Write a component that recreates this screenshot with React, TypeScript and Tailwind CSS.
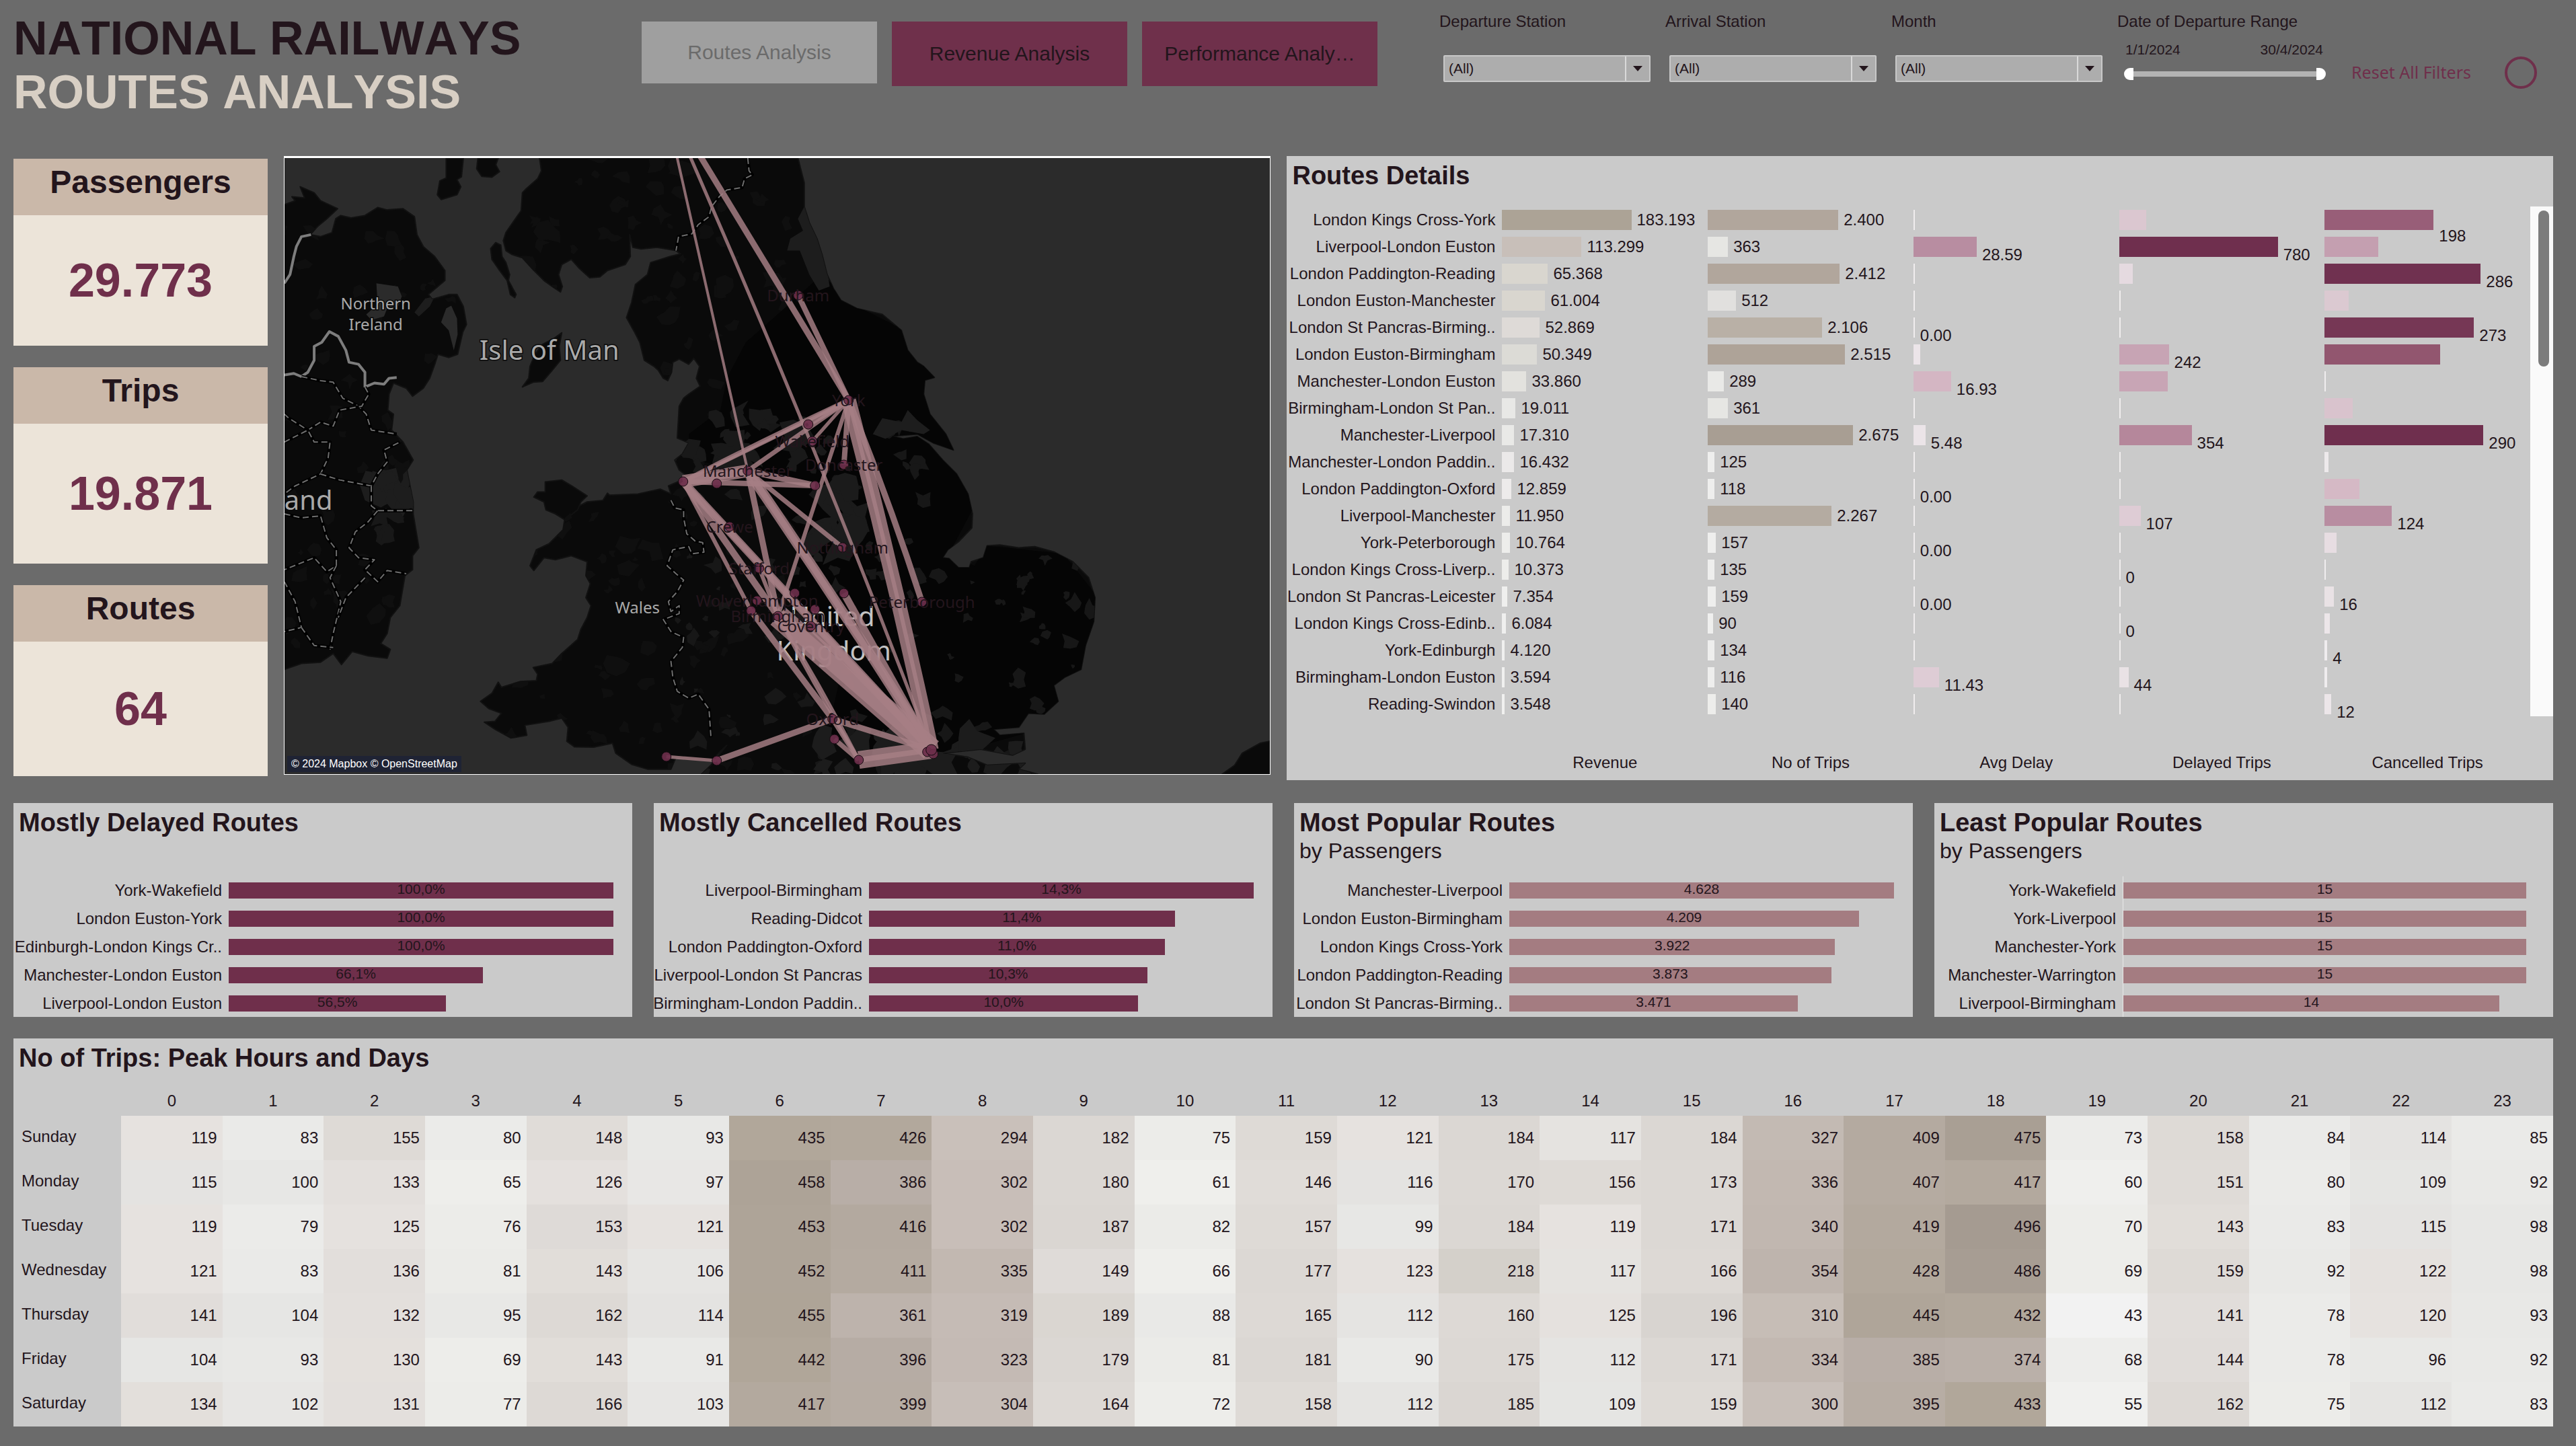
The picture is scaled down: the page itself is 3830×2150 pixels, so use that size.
import React from "react";

const INK = "#23151c";

/* ---------- data ---------- */

type Bar = { w: number; c: string; v?: string; drop?: boolean };
type Route = { name: string; cells: [Bar, Bar, Bar, Bar, Bar] };

const z = (v?: string): Bar => ({ w: 2, c: "#f0edee", v });
const b = (w: number, c: string, v?: string, drop?: boolean): Bar => ({ w, c, v, drop });

const routes: Route[] = [
  { name: "London Kings Cross-York", cells: [b(192, "#aca396", "183.193"), b(194, "#b1a69c", "2.400"), z(), b(40, "#dbc7d0"), b(162, "#985e78", "198", true)] },
  { name: "Liverpool-London Euston", cells: [b(118, "#c8bfb9", "113.299"), b(30, "#e6e6e3", "363"), b(94, "#b88da1", "28.59"), b(236, "#6f2f4e", "780"), b(80, "#c49fb0")] },
  { name: "London Paddington-Reading", cells: [b(68, "#d9d6cf", "65.368"), b(196, "#b1a69c", "2.412"), z(), b(20, "#e5dae0"), b(232, "#703150", "286")] },
  { name: "London Euston-Manchester", cells: [b(64, "#d9d6cf", "61.004"), b(42, "#e1e0de", "512"), z(), z(), b(36, "#dbc9d1")] },
  { name: "London St Pancras-Birming..", cells: [b(56, "#dedad7", "52.869"), b(170, "#b9b0a6", "2.106"), z("0.00"), z(), b(222, "#763755", "273")] },
  { name: "London Euston-Birmingham", cells: [b(52, "#dcdbd6", "50.349"), b(204, "#aea398", "2.515"), b(10, "#ece5e9"), b(74, "#c7a4b4", "242"), b(172, "#92566f")] },
  { name: "Manchester-London Euston", cells: [b(36, "#e3e2de", "33.860"), b(24, "#e9e9e7", "289"), b(56, "#d4b6c3", "16.93"), b(72, "#c8a5b5"), z()] },
  { name: "Birmingham-London St Pan..", cells: [b(20, "#e8e8e6", "19.011"), b(30, "#e6e6e3", "361"), z(), z(), b(42, "#d9c3cd")] },
  { name: "Manchester-Liverpool", cells: [b(18, "#e9e9e7", "17.310"), b(216, "#a89e93", "2.675"), b(18, "#ebe4e8", "5.48"), b(108, "#b5879b", "354"), b(236, "#6f2f4e", "290")] },
  { name: "Manchester-London Paddin..", cells: [b(18, "#ebe9e9", "16.432"), b(10, "#eeeeed", "125"), z(), z(), b(6, "#ede9eb")] },
  { name: "London Paddington-Oxford", cells: [b(14, "#edebeb", "12.859"), b(10, "#eeeeed", "118"), z("0.00"), z(), b(52, "#d5b9c5")] },
  { name: "Liverpool-Manchester", cells: [b(12, "#ececea", "11.950"), b(184, "#b4aba1", "2.267"), z(), b(32, "#deccd5", "107"), b(100, "#b88da1", "124")] },
  { name: "York-Peterborough", cells: [b(12, "#ededeb", "10.764"), b(12, "#eeeeed", "157"), z("0.00"), z(), b(18, "#e7dde2")] },
  { name: "London Kings Cross-Liverp..", cells: [b(10, "#ededeb", "10.373"), b(10, "#eeeeed", "135"), z(), z("0"), z()] },
  { name: "London St Pancras-Leicester", cells: [b(8, "#efefee", "7.354"), b(12, "#eeeeed", "159"), z("0.00"), z(), b(14, "#e9e2e5", "16")] },
  { name: "London Kings Cross-Edinb..", cells: [b(6, "#efefee", "6.084"), b(8, "#efefee", "90"), z(), z("0"), b(8, "#ece6e9")] },
  { name: "York-Edinburgh", cells: [b(4, "#f0f0ef", "4.120"), b(10, "#eeeeed", "134"), z(), z(), b(4, "#efecee", "4")] },
  { name: "Birmingham-London Euston", cells: [b(4, "#f0f0ef", "3.594"), b(10, "#eeeeed", "116"), b(38, "#deccd5", "11.43"), b(14, "#e9e2e5", "44"), b(4, "#efecee")] },
  { name: "Reading-Swindon", cells: [b(4, "#f0f0ef", "3.548"), b(12, "#ededeb", "140"), z(), z(), b(10, "#ece6e9", "12")] },
];

const measures = ["Revenue", "No of Trips", "Avg Delay", "Delayed Trips", "Cancelled Trips"];

type Ranked = { name: string; label: string; pct: number };
const delayed: Ranked[] = [
  { name: "York-Wakefield", label: "100,0%", pct: 100 },
  { name: "London Euston-York", label: "100,0%", pct: 100 },
  { name: "Edinburgh-London Kings Cr..", label: "100,0%", pct: 100 },
  { name: "Manchester-London Euston", label: "66,1%", pct: 66.1 },
  { name: "Liverpool-London Euston", label: "56,5%", pct: 56.5 },
];
const cancelled: Ranked[] = [
  { name: "Liverpool-Birmingham", label: "14,3%", pct: 100 },
  { name: "Reading-Didcot", label: "11,4%", pct: 79.5 },
  { name: "London Paddington-Oxford", label: "11,0%", pct: 76.9 },
  { name: "Liverpool-London St Pancras", label: "10,3%", pct: 72.3 },
  { name: "Birmingham-London Paddin..", label: "10,0%", pct: 70 },
];
const popular: Ranked[] = [
  { name: "Manchester-Liverpool", label: "4.628", pct: 100 },
  { name: "London Euston-Birmingham", label: "4.209", pct: 90.9 },
  { name: "London Kings Cross-York", label: "3.922", pct: 84.7 },
  { name: "London Paddington-Reading", label: "3.873", pct: 83.7 },
  { name: "London St Pancras-Birming..", label: "3.471", pct: 75 },
];
const leastPopular: Ranked[] = [
  { name: "York-Wakefield", label: "15", pct: 100 },
  { name: "York-Liverpool", label: "15", pct: 100 },
  { name: "Manchester-York", label: "15", pct: 100 },
  { name: "Manchester-Warrington", label: "15", pct: 100 },
  { name: "Liverpool-Birmingham", label: "14", pct: 93.3 },
];

const peak: [string, number[]][] = [
  ["Sunday", [119, 83, 155, 80, 148, 93, 435, 426, 294, 182, 75, 159, 121, 184, 117, 184, 327, 409, 475, 73, 158, 84, 114, 85]],
  ["Monday", [115, 100, 133, 65, 126, 97, 458, 386, 302, 180, 61, 146, 116, 170, 156, 173, 336, 407, 417, 60, 151, 80, 109, 92]],
  ["Tuesday", [119, 79, 125, 76, 153, 121, 453, 416, 302, 187, 82, 157, 99, 184, 119, 171, 340, 419, 496, 70, 143, 83, 115, 98]],
  ["Wednesday", [121, 83, 136, 81, 143, 106, 452, 411, 335, 149, 66, 177, 123, 218, 117, 166, 354, 428, 486, 69, 159, 92, 122, 98]],
  ["Thursday", [141, 104, 132, 95, 162, 114, 455, 361, 319, 189, 88, 165, 112, 160, 125, 196, 310, 445, 432, 43, 141, 78, 120, 93]],
  ["Friday", [104, 93, 130, 69, 143, 91, 442, 396, 323, 179, 81, 181, 90, 175, 112, 171, 334, 385, 374, 68, 144, 78, 96, 92]],
  ["Saturday", [134, 102, 131, 77, 166, 103, 417, 399, 304, 164, 72, 158, 112, 185, 109, 159, 300, 395, 433, 55, 162, 75, 112, 83]],
];

const stops: [number, number, number, number][] = [
  [43, 242, 242, 242],
  [65, 238, 238, 235],
  [90, 233, 233, 231],
  [116, 228, 227, 225],
  [119, 230, 226, 223],
  [155, 222, 218, 214],
  [182, 219, 215, 211],
  [218, 212, 208, 202],
  [294, 201, 192, 186],
  [335, 194, 184, 177],
  [386, 184, 174, 167],
  [410, 180, 170, 160],
  [435, 177, 167, 154],
  [458, 173, 163, 151],
  [496, 165, 155, 145],
];
function shade(v: number) {
  for (let i = 1; i < stops.length; i++) {
    const a = stops[i - 1];
    const c = stops[i];
    if (v <= c[0]) {
      const t = (v - a[0]) / (c[0] - a[0]);
      const m = (k: number) => Math.round(a[k] + (c[k] - a[k]) * t);
      return `rgb(${m(1)}, ${m(2)}, ${m(3)})`;
    }
  }
  return "#a59b91";
}

/* ---------- header ---------- */

function FilterSelect({ id, label }: { id: string; label: string }) {
  return (
    <div className="flex w-84 shrink-0 flex-col">
      <label htmlFor={id} className="h-[66px] text-2xl leading-8 text-[#23151c]">
        {label}
      </label>
      <div className="relative ml-1.5 h-10 w-[308px]">
        <select id={id} className="h-full w-full appearance-none rounded-xs border-2 border-[#c8c8c8] bg-[#adadad] pl-1.5 text-[21px] text-[#23151c]">
          <option>(All)</option>
        </select>
        <span className="pointer-events-none absolute inset-y-0.5 right-0.5 flex w-9 items-center justify-center border-l-2 border-[#d9d9d9]">
          <svg width="14" height="8" viewBox="0 0 14 8">
            <path d="M0 0h14L7 8z" fill={INK} />
          </svg>
        </span>
      </div>
    </div>
  );
}

const thumb =
  "pointer-events-none absolute inset-0 m-0 h-full w-full appearance-none bg-transparent [&::-webkit-slider-thumb]:pointer-events-auto [&::-webkit-slider-thumb]:h-[18px] [&::-webkit-slider-thumb]:w-3.5 [&::-webkit-slider-thumb]:appearance-none [&::-webkit-slider-thumb]:bg-white";

function Header() {
  return (
    <header className="flex h-58 items-start">
      <h1 className="w-[934px] shrink-0 pt-[17px] text-[70px] leading-20 font-bold whitespace-nowrap text-[#23151c] [font-kerning:none]">
        NATIONAL RAILWAYS
        <br />
        <span className="text-[#d8cfc4]">ROUTES ANALYSIS</span>
      </h1>
      <nav className="flex shrink-0 gap-[22px] pt-8 text-3xl text-[#23151c]">
        <button className="h-23 w-[350px] bg-[#9f9f9f] text-[#6b6b6b]">Routes Analysis</button>
        <button className="h-24 w-[350px] bg-[#6f304b]">Revenue Analysis</button>
        <button className="h-24 w-[350px] bg-[#6f304b]">Performance Analy…</button>
      </nav>
      <div className="ml-23 flex pt-4">
        <FilterSelect id="dep" label="Departure Station" />
        <FilterSelect id="arr" label="Arrival Station" />
        <FilterSelect id="mon" label="Month" />
        <fieldset className="w-[348px]">
          <legend className="text-2xl leading-8 text-[#23151c]">Date of Departure Range</legend>
          <div className="ml-2.5 w-[300px]">
            <div className="mt-2 flex justify-between pr-1 pl-0.5 text-[21px] leading-9 text-[#23151c]">
              <span>1/1/2024</span>
              <span>30/4/2024</span>
            </div>
            <div className="relative mt-2 h-5">
              <div className="absolute inset-x-3 top-1.5 h-2 bg-[#b3b3b3]" />
              <input type="range" aria-label="Range start" defaultValue={0} className={thumb + " [&::-webkit-slider-thumb]:rounded-l-full"} />
              <input type="range" aria-label="Range end" defaultValue={100} className={thumb + " [&::-webkit-slider-thumb]:rounded-r-full"} />
            </div>
          </div>
        </fieldset>
        <button className="mt-[68px] flex h-12 items-center gap-[50px] font-['Noto_Sans'] text-[25px] whitespace-nowrap text-[#6f2f4b]">
          Reset All Filters
          <svg width="48" height="48" viewBox="0 0 48 48">
            <circle cx="24" cy="24" r="22" fill="none" stroke="#6f2f4b" strokeWidth="4" />
          </svg>
        </button>
      </div>
    </header>
  );
}

/* ---------- KPI cards ---------- */

function Kpi({ title, value, body }: { title: string; value: string; body: string }) {
  return (
    <section className="text-center font-bold">
      <h2 className="h-21 bg-[#cab8a9] text-5xl leading-[70px] text-[#23151c]">{title}</h2>
      <p className={"flex items-center justify-center bg-[#ece4d9] text-[70px] text-[#6f2f4b] " + body}>{value}</p>
    </section>
  );
}

/* ---------- map ---------- */

const land = {
  britain:
    "405,8 408,40 402,60 384,85 378,95 376,140 365,165 352,195 348,215 352,240 362,250 378,258 395,288 412,315 425,330 438,344 441,330 435,300 440,275 455,262 468,285 484,308 500,306 512,290 540,275 548,255 547,200 552,232 565,236 590,232 620,240 627,248 610,255 596,262 580,270 575,300 556,325 550,370 542,408 555,445 563,470 570,515 585,530 592,540 600,560 607,566 613,545 615,520 625,512 640,525 648,510 657,530 652,560 658,580 640,600 632,610 625,630 622,710 640,722 630,750 618,765 625,790 640,808 608,830 612,850 595,838 560,850 515,853 512,848 505,866 480,870 462,885 445,910 442,940 420,975 400,990 390,1030 396,1042 412,1010 430,1015 455,1005 480,1020 478,1055 485,1075 478,1110 486,1130 480,1160 470,1190 465,1215 440,1250 425,1275 395,1285 402,1302 400,1318 375,1320 345,1335 340,1322 330,1350 312,1370 325,1388 345,1400 335,1420 318,1422 335,1440 360,1462 385,1455 382,1430 420,1420 440,1412 450,1435 448,1470 460,1484 490,1485 520,1475 525,1500 550,1528 575,1540 612,1540 620,1510 650,1515 675,1520 690,1495 700,1480 675,1530 660,1553 1190,1553 1160,1540 1170,1525 1110,1530 1080,1510 1040,1500 1100,1490 1150,1505 1170,1490 1168,1450 1130,1455 1120,1440 1160,1435 1175,1400 1200,1402 1222,1370 1215,1330 1232,1310 1258,1290 1265,1230 1278,1170 1280,1110 1270,1060 1245,1020 1215,995 1185,982 1160,985 1130,978 1110,980 1104,1010 1085,1020 1082,1035 1065,1035 1050,1012 1040,1010 1048,990 1065,970 1086,935 1087,900 1080,850 1062,800 1040,765 1018,725 1000,706 978,712 960,705 1000,700 1025,722 1057,740 1045,700 1020,650 1010,600 1012,565 1027,558 1010,530 1000,520 985,490 975,440 945,400 905,385 880,365 868,335 858,300 850,250 842,210 830,170 822,130 822,70 812,8",
  ireland:
    "3,125 20,115 15,105 35,108 28,80 50,95 60,115 87,135 70,160 55,180 44,200 60,205 78,195 84,160 92,152 108,158 130,152 150,132 165,138 190,135 208,155 212,200 222,230 240,255 256,290 256,315 230,350 236,362 262,350 275,350 285,380 290,425 284,445 276,500 262,508 245,500 240,525 232,560 222,585 205,605 195,585 175,572 168,600 166,640 175,650 172,690 190,720 206,765 196,790 206,870 206,900 215,985 205,1005 205,1040 193,1055 185,1130 170,1160 165,1200 155,1225 170,1240 165,1262 135,1256 110,1245 93,1278 80,1250 60,1272 30,1275 3,1290",
  kintyre: "258,8 285,8 282,55 275,62 281,80 275,100 250,112 244,100 248,65 258,58",
  arran: "308,8 340,8 336,25 342,42 330,56 314,54 306,35",
  rhins: "336,220 344,226 346,255 352,270 358,300 356,315 368,350 366,358 359,350 354,315 340,285 330,262 328,235",
  man: "440,446 428,460 410,475 398,500 390,530 388,560 378,582 395,570 410,568 425,540 438,515 436,480",
  anglesey: "414,820 440,815 456,830 480,855 470,870 465,890 445,915 430,900 415,890 412,870 396,858 402,845 414,845",
  norfolk: "1480,1553 1500,1530 1512,1500 1540,1475 1555,1470 1555,1553",
};
const east =
  "700,560 730,470 780,400 850,300 900,375 980,440 1030,560 1015,590 1060,740 1090,880 1050,1000 1090,1030 1110,980 1230,1000 1290,1120 1270,1290 1220,1380 1170,1450 1060,1500 900,1520 860,1440 880,1300 840,1180 800,1080 820,960 780,880 740,800 640,760 640,700 690,640";

const water = ["148,322 182,330 188,355 182,382 165,385 160,405 140,414 132,400 150,375", "258,385 266,378 275,410 276,450 270,490 262,440 250,420"];

const irishBorder = [
  "3,552 18,548 30,556 40,545 50,515 50,480 62,470 74,443 88,455 100,490 105,520 120,525 130,545 130,582 145,572 160,575 168,560 180,558",
  "3,322 12,300 18,255 22,230 30,205 45,200",
];
const dashed = [
  "733,8 735,40 740,50 728,60 724,82 700,88 688,105 676,130 672,155 655,175 645,198 624,205 620,240",
  "612,866 618,885 632,890 632,910 637,950 650,968 662,972 664,996 645,1000 640,982 615,990 606,1030 620,1050 632,1066 622,1095 608,1120 612,1145 625,1130 625,1150 600,1165 612,1195 632,1210 630,1235 612,1270 615,1310 622,1345 640,1362 655,1352 672,1390 675,1460",
  "30,556 60,566 80,570 95,610 120,630 132,650 140,690 180,700",
  "130,582 136,600 125,630 90,640 80,680 60,670 40,690 10,660 3,650",
  "3,720 40,690 50,720 75,720 72,760 60,800 20,830 3,850",
  "60,800 90,815 140,830 150,800 165,770 160,740 185,720",
  "140,830 140,880 150,892 205,892",
  "150,892 135,920 115,945 105,985 120,1010 145,1015 130,1040 150,1070 165,1042 195,1050",
  "3,900 30,910 60,905 70,960 85,990 85,1030 70,1045 50,1010 3,1040",
  "85,1030 75,1060 92,1120 80,1200 75,1240",
  "130,1060 100,1110 88,1160",
  "3,1070 20,1120 30,1185 3,1195",
  "30,1185 50,1230 80,1235",
];

function blobs(seed: number, n: number, x0: number, y0: number, x1: number, y1: number, size: number) {
  let s = seed;
  const r = () => {
    s = (s * 16807) % 2147483647;
    return s / 2147483647;
  };
  return Array.from({ length: n }, () => {
    const cx = x0 + r() * (x1 - x0);
    const cy = y0 + r() * (y1 - y0);
    const k = size * (0.3 + r());
    const pts = Array.from({ length: 8 }, (_, i) => {
      const a = (i / 8) * Math.PI * 2;
      const d = k * (0.35 + r());
      return `${Math.round(cx + Math.cos(a) * d)},${Math.round(cy + Math.sin(a) * d * 1.5)}`;
    });
    return pts.join(" ");
  });
}

const city: Record<string, [number, number]> = {
  Edinburgh: [563, -94],
  Durham: [764, 204],
  York: [839, 360],
  Leeds: [779, 396],
  Wakefield: [785, 421],
  Doncaster: [832, 456],
  Manchester: [689, 465],
  Liverpool: [593, 481],
  Warrington: [643, 484],
  Sheffield: [789, 487],
  Crewe: [662, 548],
  Nottingham: [830, 579],
  Stafford: [706, 610],
  Tamworth: [759, 647],
  Leicester: [832, 647],
  Wolverhampton: [703, 658],
  Dudley: [694, 673],
  Nuneaton: [789, 671],
  Birmingham: [734, 681],
  Coventry: [783, 696],
  Peterborough: [948, 660],
  Oxford: [815, 834],
  Didcot: [818, 864],
  Reading: [854, 895],
  Bristol: [643, 896],
  Cardiff: [568, 890],
  Paddington: [956, 883],
  Euston: [965, 886],
  London: [962, 880],
};

const links: [string, string, number, number?][] = [
  ["Edinburgh", "Manchester", 4],
  ["Edinburgh", "London", 5, 16],
  ["Edinburgh", "York", 9],
  ["York", "Durham", 8],
  ["York", "Leeds", 8],
  ["York", "Liverpool", 7, -6],
  ["York", "Liverpool", 5, 4],
  ["York", "Manchester", 7],
  ["York", "Wakefield", 5],
  ["York", "Doncaster", 8],
  ["York", "Peterborough", 9, 6],
  ["York", "London", 22, 6],
  ["York", "London", 6, 6],
  ["York", "Birmingham", 6],
  ["Liverpool", "Manchester", 19],
  ["Liverpool", "Manchester", 12],
  ["Liverpool", "Sheffield", 8],
  ["Manchester", "Sheffield", 9],
  ["Manchester", "Nottingham", 7],
  ["Manchester", "London", 15, 6],
  ["Manchester", "London", 9, 6],
  ["Manchester", "Birmingham", 9],
  ["Liverpool", "London", 12],
  ["Liverpool", "London", 8],
  ["Liverpool", "Birmingham", 10],
  ["Liverpool", "Dudley", 6],
  ["Stafford", "Birmingham", 6],
  ["Birmingham", "London", 34],
  ["Birmingham", "London", 22],
  ["Coventry", "London", 12, 4],
  ["Leicester", "London", 11],
  ["Birmingham", "Reading", 5, 6],
  ["Birmingham", "Reading", 5, -4],
  ["Dudley", "Oxford", 9],
  ["Oxford", "Reading", 7],
  ["Didcot", "Reading", 7],
  ["Oxford", "London", 9],
  ["Oxford", "Bristol", 9],
  ["Bristol", "Cardiff", 5],
  ["Reading", "London", 26],
  ["Reading", "London", 8],
];

const named = ["Durham", "York", "Wakefield", "Doncaster", "Manchester", "Crewe", "Nottingham", "Stafford", "Wolverhampton", "Birmingham", "Coventry", "Peterborough", "Oxford"];

function RouteMap() {
  return (
    <section aria-label="Route map" className="relative h-[920px] self-start overflow-hidden border border-t-[3px] border-white bg-[#2b2b2b]">
      <svg className="h-full w-full" viewBox="0 0 1466 916" preserveAspectRatio="xMidYMid slice">
        <defs>
          <clipPath id="gb">
            <polygon points={land.britain} />
          </clipPath>
          <clipPath id="ie">
            <polygon points={land.ireland} />
          </clipPath>
        </defs>
        <g transform="scale(.9439 .5931) translate(-3 -8)">
          {Object.values(land).map((p) => (
            <polygon key={p} points={p} fill="#0a0a0a" stroke="#111" strokeWidth="2" vectorEffect="non-scaling-stroke" strokeLinejoin="round" />
          ))}
          <g clipPath="url(#gb)">
            {blobs(11, 170, 340, 0, 830, 1553, 15).map((p) => (
              <polygon key={p} points={p} fill="#0f0f0f" />
            ))}
            <polygon points={east} fill="#050505" />
            {blobs(77, 130, 620, 640, 1280, 1553, 12).map((p) => (
              <polygon key={p} points={p} fill="#171717" />
            ))}
            {blobs(5, 26, 640, 640, 860, 800, 20).map((p) => (
              <polygon key={p} points={p} fill="#191919" />
            ))}
            {blobs(9, 22, 850, 1440, 1170, 1553, 26).map((p) => (
              <polygon key={p} points={p} fill="#1c1c1c" />
            ))}
            {blobs(21, 12, 840, 820, 900, 1010, 24).map((p) => (
              <polygon key={p} points={p} fill="#1b1b1b" />
            ))}
            <polygon points="822,130 850,200 862,330 845,340 830,300 815,240 795,240 800,210 820,190 812,160" fill="#1d1d1d" />
            <polygon points="930,700 945,660 975,670 985,640 1000,665 1020,690 1010,700 975,690 950,712" fill="#1d1d1d" />
          </g>
          <g clipPath="url(#ie)">
            {blobs(31, 70, 0, 100, 280, 1280, 13).map((p) => (
              <polygon key={p} points={p} fill="#0f0f0f" />
            ))}
            {blobs(41, 8, 155, 800, 200, 870, 22).map((p) => (
              <polygon key={p} points={p} fill="#1d1d1d" />
            ))}
            {blobs(43, 12, 150, 900, 190, 960, 14).map((p) => (
              <polygon key={p} points={p} fill="#181818" />
            ))}
            <polygon points="225,360 240,355 232,380 215,405 208,395" fill="#1d1d1d" />
          </g>
          {water.map((p) => (
            <polygon key={p} points={p} fill="#2b2b2b" />
          ))}
          {irishBorder.map((p) => (
            <polyline key={p} points={p} fill="none" stroke="#7d7d7d" strokeWidth="4" strokeLinejoin="round" vectorEffect="non-scaling-stroke" />
          ))}
          {dashed.map((p) => (
            <g key={p} fill="none" strokeLinejoin="round">
              <polyline points={p} stroke="#000" strokeWidth="5" vectorEffect="non-scaling-stroke" />
              <polyline points={p} stroke="#6e6e6e" strokeWidth="2" strokeDasharray="9 5" vectorEffect="non-scaling-stroke" />
            </g>
          ))}
        </g>
        <g className="font-['Noto_Sans']" fill="#a9a9a9" stroke="#0a0a0a" strokeWidth="3" paintOrder="stroke" textAnchor="middle">
          <text x="136" y="225" fontSize="24">Northern</text>
          <text x="136" y="256" fontSize="24">Ireland</text>
          <text x="394" y="300" fontSize="40">Isle of Man</text>
          <text x="0" y="523" fontSize="40" textAnchor="start">and</text>
          <text x="525" y="677" fontSize="24">Wales</text>
          <text x="815" y="696" fontSize="40" fill="#c4c4c4">United</text>
          <text x="817" y="747" fontSize="40" fill="#c4c4c4">Kingdom</text>
        </g>
        <g fill="none" stroke="#a67e84" strokeOpacity="0.84">
          {links.map(([from, to, w, bend = 0], i) => {
            const [x1, y1] = city[from];
            const [x2, y2] = city[to];
            return <path key={i} d={`M${x1} ${y1}Q${(x1 + x2) / 2 + bend} ${(y1 + y2) / 2} ${x2} ${y2}`} strokeWidth={w} />;
          })}
        </g>
        <g fill="#6d2f4b" fillOpacity="0.92" stroke="#150a10" strokeWidth="1">
          {Object.entries(city).map(([k, [x, y]]) => (
            <circle key={k} cx={x} cy={y} r={k === "London" ? 8 : 7} />
          ))}
        </g>
        <g className="font-['Noto_Sans']" fill={INK} fontSize="24" textAnchor="middle">
          {named.map((k) => (
            <text key={k} x={city[k][0]} y={city[k][1] + 9}>
              {k}
            </text>
          ))}
        </g>
      </svg>
      <p className="absolute bottom-[3px] left-1 bg-[#1f2334] px-1.5 text-base leading-6 whitespace-nowrap text-white">© 2024 Mapbox © OpenStreetMap</p>
    </section>
  );
}

/* ---------- routes details ---------- */

function RoutesDetails() {
  return (
    <section className="bg-[#cacaca] text-2xl text-[#23151c]">
      <h2 className="h-[75px] pl-2 text-[38px] leading-[59px] font-bold">Routes Details</h2>
      <div className="grid grid-cols-[1fr_34px] items-start">
        <table className="w-full table-fixed border-collapse">
          <colgroup>
            <col className="w-80" />
            {measures.map((m) => (
              <col key={m} />
            ))}
          </colgroup>
          <tbody>
            {routes.map((r) => (
              <tr key={r.name} className="h-10">
                <th scope="row" className="p-0 font-normal whitespace-nowrap">
                  <div className="flex justify-end pr-2.5 leading-[30px]">{r.name}</div>
                </th>
                {r.cells.map((c, i) => (
                  <td key={i} className="p-0">
                    <div className="flex h-[30px] items-center gap-2 leading-[30px] whitespace-nowrap">
                      <div className="h-full shrink-0" style={{ width: `${(c.w / 305.6) * 100}%`, background: c.c }} />
                      {c.v && <span className={i < 2 ? "" : c.drop ? "translate-y-6" : "translate-y-3"}>{c.v}</span>}
                    </div>
                  </td>
                ))}
              </tr>
            ))}
          </tbody>
          <tfoot>
            <tr className="h-[93px]">
              <td />
              {measures.map((m) => (
                <th key={m} scope="col" className="p-0 pt-10 text-center font-normal">
                  {m}
                </th>
              ))}
            </tr>
          </tfoot>
        </table>
        <div className="h-[758px] bg-[#fafafa] pt-1.5 pl-3">
          <div className="h-58 w-4 rounded-full bg-[#7c7c7c]" />
        </div>
      </div>
    </section>
  );
}

/* ---------- ranked bar cards ---------- */

type RankProps = { title: string; sub?: string; rows: Ranked[]; color: string; labelCol: string; pad: string };
function RankCard({ title, sub, rows, color, labelCol, pad }: RankProps) {
  return (
    <section className="h-[318px] min-w-0 overflow-hidden bg-[#cacaca] text-[#23151c]">
      <div className="h-[109px] pt-1 pl-2">
        <h2 className="text-[38px] leading-[51px] font-bold">{title}</h2>
        {sub && <p className="text-[32px] leading-8">{sub}</p>}
      </div>
      <ul>
        {rows.map((r) => (
          <li key={r.name} className="flex h-[42px] items-stretch">
            <div className={"flex shrink-0 items-center justify-end pr-2.5 text-2xl whitespace-nowrap " + labelCol}>{r.name}</div>
            <div className={"flex flex-1 items-center " + pad}>
              <div className={"h-6 text-center text-[21px] leading-5 " + color} style={{ width: `${r.pct}%` }}>
                {r.label}
              </div>
            </div>
          </li>
        ))}
      </ul>
    </section>
  );
}

/* ---------- heat map ---------- */

function PeakHours() {
  return (
    <section className="mt-8 bg-[#cacaca] text-2xl text-[#23151c]">
      <h2 className="pl-2 text-[38px] leading-[59px] font-bold">No of Trips: Peak Hours and Days</h2>
      <table className="mt-1.5 w-full table-fixed border-collapse">
        <colgroup>
          <col className="w-40" />
          {peak[0][1].map((_, h) => (
            <col key={h} />
          ))}
        </colgroup>
        <thead>
          <tr className="h-[50px]">
            <td />
            {peak[0][1].map((_, h) => (
              <th key={h} scope="col" className="p-0 pt-1.5 font-normal">
                {h}
              </th>
            ))}
          </tr>
        </thead>
        <tbody>
          {peak.map(([day, values]) => (
            <tr key={day} className="h-[66px]">
              <th scope="row" className="p-0 pb-1 pl-3 text-left font-normal">
                {day}
              </th>
              {values.map((v, h) => (
                <td key={h} className="p-0 pr-2 text-right" style={{ background: shade(v) }}>
                  {v}
                </td>
              ))}
            </tr>
          ))}
        </tbody>
      </table>
    </section>
  );
}

export default function App() {
  return (
    <div className="min-h-screen bg-[#6b6b6b] pr-[34px] pb-7 pl-5 font-['Liberation_Sans',Arial,sans-serif]">
      <Header />
      <main>
        <div className="grid grid-cols-[378px_1467fr_1882fr] gap-6">
          <div className="flex flex-col gap-8 pt-1">
            <Kpi title="Passengers" value="29.773" body="h-[194px]" />
            <Kpi title="Trips" value="19.871" body="h-[208px]" />
            <Kpi title="Routes" value="64" body="h-[200px]" />
          </div>
          <RouteMap />
          <RoutesDetails />
        </div>
        <div className="mt-[34px] grid grid-cols-4 gap-8">
          <RankCard title="Mostly Delayed Routes" rows={delayed} color="bg-[#6f2f4b]" labelCol="w-80" pad="pr-7" />
          <RankCard title="Mostly Cancelled Routes" rows={cancelled} color="bg-[#6f2f4b]" labelCol="w-80" pad="pr-7" />
          <RankCard title="Most Popular Routes" sub="by Passengers" rows={popular} color="bg-[#a47c81]" labelCol="w-80" pad="pr-7" />
          <RankCard title="Least Popular Routes" sub="by Passengers" rows={leastPopular} color="bg-[#a47c81]" labelCol="w-70" pad="border-l border-[#e8e8e8] pr-10" />
        </div>
        <PeakHours />
      </main>
    </div>
  );
}
